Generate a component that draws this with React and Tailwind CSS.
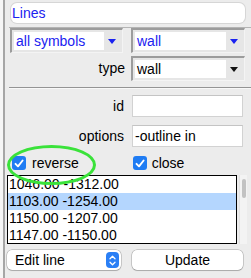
import React from "react";

const blue = "text-[#1a22f0]";

const Arrow = ({ color }) => (
  <svg width="8" height="5" viewBox="0 0 8 5">
    <polygon points="0,0 8,0 4,5" fill={color} />
  </svg>
);

const MenuButton = ({ label, textClass, arrow, className }) => (
  <div className={`flex h-[25px] border-t-2 border-l-2 border-r border-b border-t-[#9c9c9c] border-l-[#9c9c9c] border-r-[#f4f4f4] border-b-[#f4f4f4] bg-[#e6e6e6] p-[2px] ${className}`}>
    <div className={`flex-1 bg-white pl-[2px] leading-[18px] ${textClass}`}>{label}</div>
    <div className="w-[16px] flex items-center justify-center">
      <Arrow color={arrow} />
    </div>
  </div>
);

const Check = () => (
  <div className="w-[14px] h-[14px] rounded-[3px] bg-[#1f7cf3] flex items-center justify-center">
    <svg width="10" height="9" viewBox="0 0 10 9">
      <path d="M1.5 4.8 L4 7.3 L8.6 1.5" fill="none" stroke="white" strokeWidth="1.9" strokeLinecap="round" strokeLinejoin="round" />
    </svg>
  </div>
);

const Entry = ({ value }) => (
  <div className="w-[111px] h-[22px] bg-white border border-[#d2d2d2] border-t-[#c4c4c4] pl-[2px] leading-[20px]">
    {value}
  </div>
);

const rows = ["1046.00 -1312.00", "1103.00 -1254.00", "1150.00 -1207.00", "1147.00 -1150.00"];

export default function App() {
  return (
    <div className="relative w-[251px] h-[278px] flex bg-[#f6f6f6] pl-[3px] font-['Liberation_Sans',Arial,sans-serif] text-[14px] text-black overflow-hidden">
      <div className="flex-1 flex flex-col border-l-2 border-[#a6a6a6] bg-[#ececec]">
        <div className={`mt-[3px] ml-[6px] w-[234px] h-[20px] rounded-[6px] bg-white shadow-[0_0_0_1px_#d6d6d6] pl-[1px] leading-[20px] ${blue}`}>
          Lines
        </div>
        <div className="mt-[4px] ml-[4px] h-px bg-[#b4b4b4]" />

        <div className="flex">
          <MenuButton label="all symbols" textClass={blue} arrow="#1a22f0" className="ml-[5px] w-[113px]" />
          <MenuButton label="wall" textClass={blue} arrow="#1a22f0" className="ml-[8px] w-[114px]" />
        </div>

        <div className="flex mt-[3px] items-center">
          <div className="w-[120px] text-right">type</div>
          <MenuButton label="wall" textClass="text-black" arrow="#111" className="ml-[6px] w-[114px]" />
        </div>

        <div className="mt-[6px] ml-[4px] h-[2px] border-t border-[#949494] border-b border-b-[#f8f8f8]" />

        <div className="flex mt-[6px] items-center">
          <div className="w-[119px] text-right">id</div>
          <div className="ml-[8px]"><Entry value="" /></div>
        </div>
        <div className="flex mt-[8px] items-center">
          <div className="w-[119px] text-right">options</div>
          <div className="ml-[8px]"><Entry value="-outline in" /></div>
        </div>

        <div className="flex mt-[9px] h-[14px] items-center">
          <div className="ml-[7px] flex items-center gap-[6px]">
            <Check />
            <span className="leading-[14px]">reverse</span>
          </div>
          <div className="ml-[54px] flex items-center gap-[5px]">
            <Check />
            <span className="leading-[14px]">close</span>
          </div>
        </div>

        <div className="flex mt-[5px]">
          <div className="ml-[2px] w-[230px] h-[69px] border border-black bg-white overflow-hidden">
            {rows.map((r, i) => (
              <div key={r} className={`h-[17px] leading-[17px] pl-[1px] ${i === 1 ? "bg-[#b4d6fe]" : ""}`}>
                {r}
              </div>
            ))}
          </div>
          <div className="ml-[2px] w-[8px] h-[69px] bg-[#f3f3f3] border-l border-[#e2e2e2] pt-[4px] flex justify-center">
            <div className="w-[4px] h-[19px] rounded-full bg-[#c2c2c2]" />
          </div>
        </div>

        <div className="flex mt-[6px]">
          <div className="ml-[2px] w-[114px] h-[20px] rounded-[5px] bg-white shadow-[0_0_0_0.5px_rgba(0,0,0,0.3),0_1px_1px_rgba(0,0,0,0.15)] flex items-center">
            <span className="flex-1 pl-[8px] leading-[20px]">Edit line</span>
            <div className="mr-[2px] w-[13px] h-[16px] rounded-[4px] bg-[#2a7ff5] flex items-center justify-center">
              <svg width="7" height="11" viewBox="0 0 7 11">
                <path d="M1 3.8 L3.5 1.3 L6 3.8 M1 7.2 L3.5 9.7 L6 7.2" fill="none" stroke="white" strokeWidth="1.3" strokeLinecap="round" strokeLinejoin="round" />
              </svg>
            </div>
          </div>
          <div className="ml-[11px] w-[111px] h-[20px] rounded-[5px] bg-white shadow-[0_0_0_0.5px_rgba(0,0,0,0.3),0_1px_1px_rgba(0,0,0,0.15)] text-center leading-[20px]">
            Update
          </div>
        </div>
      </div>

      <div className="absolute left-[7px] top-[145px] w-[89px] h-[40px] rounded-[50%] border-[3px] border-[#3ae23a]" />
    </div>
  );
}
